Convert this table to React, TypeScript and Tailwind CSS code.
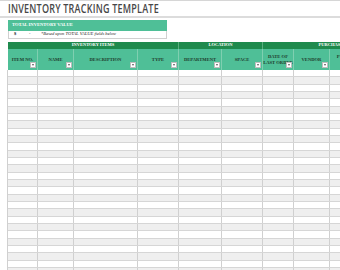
import React from "react";

const cols = [
  { w: 30, label: ["ITEM NO."] },
  { w: 36, label: ["NAME"] },
  { w: 64, label: ["DESCRIPTION"] },
  { w: 41, label: ["TYPE"] },
  { w: 43, label: ["DEPARTMENT"] },
  { w: 41, label: ["SPACE"] },
  { w: 31, label: ["DATE OF", "LAST ORDER"] },
  { w: 36, label: ["VENDOR"] },
  { w: 40, label: ["PURCHASE", "PRICE"] },
];

const serif = { fontFamily: '"Liberation Serif", "Times New Roman", serif' };

function Drop() {
  return (
    <div className="absolute right-[1px] bottom-[2px] w-[6px] h-[6px] bg-white border border-[#bdbdbd] flex items-center justify-center">
      <div className="w-0 h-0 border-l-[1.5px] border-r-[1.5px] border-t-[2px] border-l-transparent border-r-transparent border-t-[#555]" />
    </div>
  );
}

export default function App() {
  const rows = Array.from({ length: 28 }, (_, i) => i);
  return (
    <div
      className="w-[340px] h-[270px] overflow-hidden bg-white flex flex-col"
      style={serif}
    >
      <div className="h-[1px] bg-[#d6d6d6] shrink-0" />
      <div className="h-[15px] shrink-0 pl-[8px] flex items-center">
        <span
          className="text-[12px] font-semibold text-[#474747] origin-left scale-x-[0.75] whitespace-nowrap leading-none tracking-[0.3px]"
          style={{ fontFamily: '"Open Sans", "Liberation Sans", sans-serif' }}
        >
          INVENTORY TRACKING TEMPLATE
        </span>
      </div>
      <div className="h-[2px] bg-[#dcdcdc] shrink-0" />
      <div className="h-[2px] shrink-0" />
      <div className="ml-[8px] w-[159px] shrink-0">
        <div className="h-[11px] bg-[#4fbf97] flex items-center pl-[4px]">
          <span className="text-[4.6px] text-white font-bold whitespace-nowrap">TOTAL INVENTORY VALUE</span>
        </div>
        <div className="h-[8px] border border-t-0 border-[#d0d0d0] flex items-center text-[4.5px] text-[#222]">
          <span className="w-[20px] pl-[5px] font-bold">$</span>
          <span className="w-[12px]">-</span>
          <span className="italic whitespace-nowrap">*Based upon TOTAL VALUE fields below</span>
        </div>
      </div>
      <div className="h-[3px] shrink-0" />
      <div className="ml-[8px] h-[7px] shrink-0 bg-[#1f8a4d] flex text-white text-[4.5px] font-bold">
        <div className="w-[171px] shrink-0 flex items-center justify-center border-r border-[#5aae7f]">INVENTORY ITEMS</div>
        <div className="w-[84px] shrink-0 flex items-center justify-center border-r border-[#5aae7f]">LOCATION</div>
        <div className="w-[170px] shrink-0 flex items-center justify-center whitespace-nowrap">PURCHASE INFORMATION</div>
      </div>
      <div className="ml-[8px] h-[21px] shrink-0 flex bg-[#4fbf97]">
        {cols.map((c, i) => (
          <div
            key={i}
            className="relative shrink-0 h-full border-r border-[#7fcfb0] flex flex-col items-center justify-center text-[4.6px] font-bold text-[#1e3a2c] leading-[5.5px] text-center overflow-hidden"
            style={{ width: c.w }}
          >
            {c.label.map((l, j) => (
              <span key={j} className="whitespace-nowrap">{l}</span>
            ))}
            {i < 8 && <Drop />}
          </div>
        ))}
      </div>
      <div className="flex">
        <div className="w-[8px] border-r border-[#d0d0d0] shrink-0" />
        <div className="flex flex-col">
          {rows.map((r) => (
            <div
              key={r}
              className={`flex shrink-0 h-[7.33px] border-b border-[#d6d6d6] ${r % 2 === 1 ? "bg-[#efefef]" : "bg-white"}`}
            >
              {cols.map((c, i) => (
                <div
                  key={i}
                  className="shrink-0 h-full border-r border-[#d0d0d0]"
                  style={{ width: c.w }}
                />
              ))}
            </div>
          ))}
        </div>
      </div>
    </div>
  );
}
